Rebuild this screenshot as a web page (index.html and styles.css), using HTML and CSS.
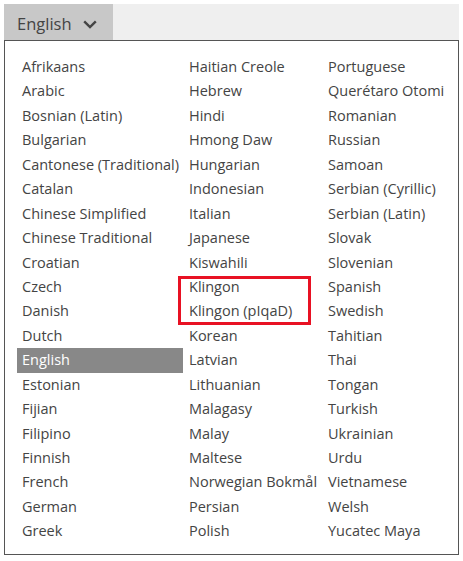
FILE: index.html
```html
<!DOCTYPE html>
<html lang="en">
<head>
    <meta charset="UTF-8">
    <title>Language</title>
    <link rel="stylesheet" href="styles.css">
</head>
<body>

<div class="bar">
    <button class="lang-button">English
        <svg class="chevron" width="14" height="9" viewBox="0 0 14 9"><path d="M1.2 1.3 L7 7 L12.8 1.3" fill="none" stroke="#444" stroke-width="2.4"/></svg>
    </button>
</div>

<div class="panel">
    <ul class="col col-1">
        <li>Afrikaans</li>
        <li>Arabic</li>
        <li>Bosnian (Latin)</li>
        <li>Bulgarian</li>
        <li>Cantonese (Traditional)</li>
        <li>Catalan</li>
        <li>Chinese Simplified</li>
        <li>Chinese Traditional</li>
        <li>Croatian</li>
        <li>Czech</li>
        <li>Danish</li>
        <li>Dutch</li>
        <li class="selected">English</li>
        <li>Estonian</li>
        <li>Fijian</li>
        <li>Filipino</li>
        <li>Finnish</li>
        <li>French</li>
        <li>German</li>
        <li>Greek</li>
    </ul>
    <ul class="col col-2">
        <li>Haitian Creole</li>
        <li>Hebrew</li>
        <li>Hindi</li>
        <li>Hmong Daw</li>
        <li>Hungarian</li>
        <li>Indonesian</li>
        <li>Italian</li>
        <li>Japanese</li>
        <li>Kiswahili</li>
        <li class="marked">
            <ul>
                <li>Klingon</li>
                <li>Klingon (pIqaD)</li>
            </ul>
        </li>
        <li>Korean</li>
        <li>Latvian</li>
        <li>Lithuanian</li>
        <li>Malagasy</li>
        <li>Malay</li>
        <li>Maltese</li>
        <li>Norwegian Bokmål</li>
        <li>Persian</li>
        <li>Polish</li>
    </ul>
    <ul class="col col-3">
        <li>Portuguese</li>
        <li>Querétaro Otomi</li>
        <li>Romanian</li>
        <li>Russian</li>
        <li>Samoan</li>
        <li>Serbian (Cyrillic)</li>
        <li>Serbian (Latin)</li>
        <li>Slovak</li>
        <li>Slovenian</li>
        <li>Spanish</li>
        <li>Swedish</li>
        <li>Tahitian</li>
        <li>Thai</li>
        <li>Tongan</li>
        <li>Turkish</li>
        <li>Ukrainian</li>
        <li>Urdu</li>
        <li>Vietnamese</li>
        <li>Welsh</li>
        <li>Yucatec Maya</li>
    </ul>
</div>

</body>
</html>
```

FILE: styles.css
```css
body {
    margin: 4px;
    font-family: "Open Sans", "Noto Sans", sans-serif;
    color: #444;
    background-color: #fff;
}
.bar {
    display: flex;
    height: 36px;
    width: 457px;
    background-color: #efefef;
}
.lang-button {
    display: flex;
    align-items: center;
    gap: 11px;
    width: 109px;
    padding: 3px 0 0 13px;
    border: none;
    background-color: #c8c8c8;
    color: #444;
    font-family: inherit;
    font-size: 16.5px;
}
.chevron {
    margin-top: 1px;
}
.panel {
    display: flex;
    width: 453px;
    height: 513px;
    border: 1px solid #555;
    padding: 0;
    box-sizing: content-box;
}
.col {
    list-style: none;
    margin: 0;
    padding: 14px 0 0 0;
}
.col ul {
    list-style: none;
    margin: 0;
    padding: 0;
}
.col li {
    height: 24.45px;
    line-height: 24.45px;
    padding-left: 5px;
    font-size: 14.5px;
    white-space: nowrap;
}
.col .marked {
    position: relative;
    height: auto;
    padding-left: 0;
}
.marked::before {
    content: "";
    position: absolute;
    left: -6px;
    top: 1px;
    right: 12px;
    bottom: -1px;
    border: 3px solid #e81123;
}
.col-1 {
    width: 166px;
    margin-left: 12px;
}
.col-2 {
    width: 139px;
    margin-left: 1px;
}
.col-3 {
    flex: 1;
}
.selected {
    background-color: #888;
    color: #fff;
}
```
